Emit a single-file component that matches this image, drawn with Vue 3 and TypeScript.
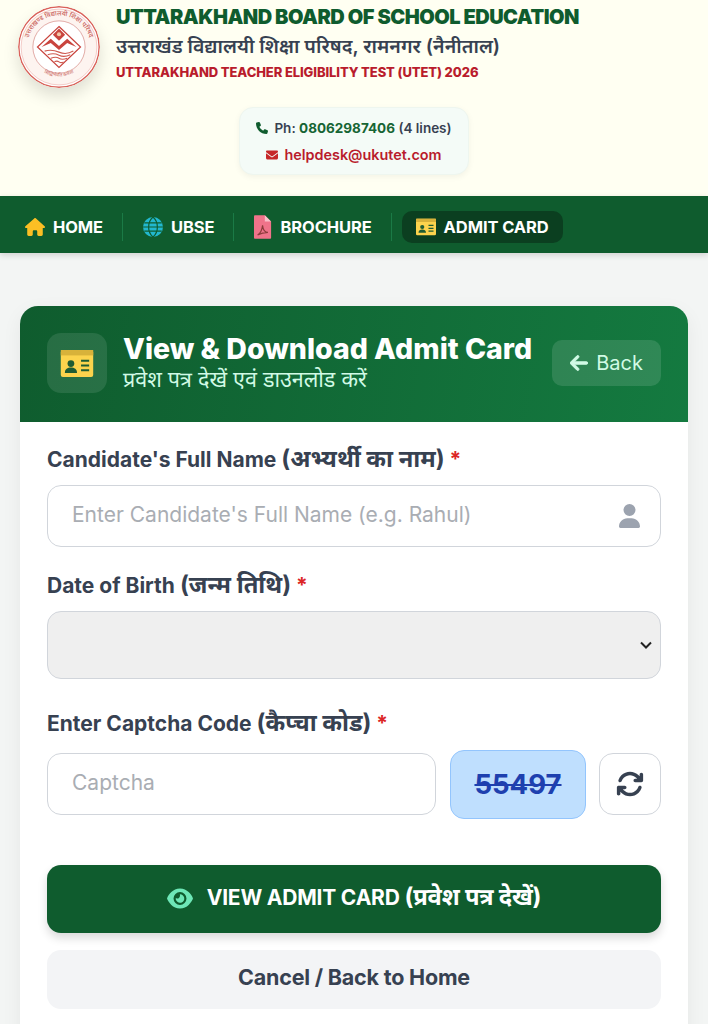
<template>
  <div class="page">
    <header class="top">
      <div class="brand">
        <svg class="seal" viewBox="0 0 80 80">
          <circle cx="40" cy="40" r="39.2" fill="#fff" stroke="#d9605a" stroke-width="1.4" />
          <circle cx="40" cy="40" r="37" fill="#fdf4f0" stroke="#e9a19b" stroke-width=".5" />
          <circle cx="40" cy="40" r="25.5" fill="#fff" stroke="#cf7a74" stroke-width=".6" />
          <defs>
            <path id="sealTop" d="M10 48 A31 31 0 1 1 70 48" />
            <path id="sealBottom" d="M17 58 A30 30 0 0 0 63 58" />
          </defs>
          <text class="seal-text"><textPath href="#sealTop" startOffset="50%" text-anchor="middle">उत्तराखण्ड विद्यालयी शिक्षा परिषद</textPath></text>
          <text class="seal-small"><textPath href="#sealBottom" startOffset="50%" text-anchor="middle">सिद्धिर्भवति कर्मजा</textPath></text>
          <path d="M40 20 L61 40 L40 60 L19 40 Z" fill="#fff" stroke="#c9443e" stroke-width="1.2" />
          <path d="M23 40 L32 32 L40 39 L48 32 L57 40 L48 36 L40 43 L32 36 Z" fill="#c9443e" />
          <path d="M40 22 L46 28 L40 34 L34 28 Z" fill="#c9443e" />
          <circle cx="40" cy="27.5" r="2" fill="#f3c9a8" />
          <path d="M26 44 Q33 42 40 45 T54 44 M29 47.500 Q35 45.500 40 48 T51 47.500 M32 51 Q37 49 40 51 T48 51 M35.500 54.500 Q38 53 40 54.500 T44.500 54.500" fill="none" stroke="#cf5a50" stroke-width="1.1" />
        </svg>
        <div class="brand-text">
          <h1>UTTARAKHAND BOARD OF SCHOOL EDUCATION</h1>
          <p class="hindi">उत्तराखंड विद्यालयी शिक्षा परिषद, रामनगर (नैनीताल)</p>
          <p class="exam">UTTARAKHAND TEACHER ELIGIBILITY TEST (UTET) 2026</p>
        </div>
      </div>
      <div class="contact">
        <div class="line phone">
          <svg viewBox="0 0 512 512" class="ci"><path fill="#0f5c2e" d="M164.900 24.600c-7.700-18.600-28-28.500-47.400-23.200l-88 24C12.100 30.200 0 46 0 64C0 311.400 200.600 512 448 512c18 0 33.800-12.100 38.600-29.500l24-88c5.300-19.400-4.600-39.700-23.200-47.400l-96-40c-16.300-6.800-35.200-2.100-46.300 11.600L304.700 368C234.300 334.700 177.300 277.700 144 207.300L193.300 167c13.700-11.200 18.400-30 11.600-46.300l-40-96z" /></svg>
          <span>Ph: <b>08062987406</b> (4 lines)</span>
        </div>
        <div class="line mail">
          <svg viewBox="0 0 512 512" class="ci"><path fill="#c62828" d="M48 64C21.500 64 0 85.500 0 112c0 15.100 7.100 29.300 19.200 38.400L236.800 313.600c11.400 8.500 27 8.500 38.400 0L492.800 150.400c12.100-9.100 19.200-23.300 19.200-38.400c0-26.500-21.500-48-48-48H48zM0 176V384c0 35.300 28.700 64 64 64H448c35.300 0 64-28.700 64-64V176L294.400 339.200c-22.800 17.100-54 17.100-76.800 0L0 176z" /></svg>
          <span>helpdesk@ukutet.com</span>
        </div>
      </div>
    </header>

    <nav class="nav">
      <a class="nav-item">
        <svg viewBox="0 0 576 512" class="ni"><path fill="#fbbf24" d="M575.800 255.500c0 18-15 32.100-32 32.100h-32l.7 160.200c0 2.700-.2 5.400-.5 8.100V472c0 22.100-17.900 40-40 40H456c-1.100 0-2.200 0-3.300-.1c-1.400 .1-2.800 .1-4.200 .1H416 392c-22.100 0-40-17.900-40-40V448 384c0-17.700-14.300-32-32-32H256c-17.700 0-32 14.300-32 32v64 24c0 22.100-17.900 40-40 40H160 128.100c-1.500 0-3-.1-4.500-.2c-1.200 .1-2.400 .2-3.600 .2H104c-22.100 0-40-17.900-40-40V360c0-.9 0-1.900 .1-2.800V287.600H32c-18 0-32-14-32-32.100c0-9 3-17 10-24L266.400 8c7-7 15-8 22-8s15 2 21 7L564.800 231.500c8 7 12 15 11 24z" /></svg>
        HOME
      </a>
      <a class="nav-item">
        <svg viewBox="0 0 24 24" class="ni globe"><circle cx="12" cy="12" r="12" fill="#22b8cf" /><path d="M0 12h24M1.500 7h21M1.500 17h21M12 0c-7 6-7 18 0 24M12 0c7 6 7 18 0 24" fill="none" stroke="#0f5c2e" stroke-width="1.400" /></svg>
        UBSE
      </a>
      <a class="nav-item">
        <svg viewBox="0 0 20 26" class="ni pdf"><path d="M1 0h11l7 7v18a1 1 0 0 1-1 1H1a1 1 0 0 1-1-1V1a1 1 0 0 1 1-1z" fill="#f0738a" /><path d="M12 0v7h7z" fill="#f9c0ca" /><path d="M4 22c3-2 5-6 5.500-11c.5 5 3 8 6 8c-4 0-8 1-11.500 3z" fill="none" stroke="#8c3b3b" stroke-width="1.300" /></svg>
        BROCHURE
      </a>
      <a class="nav-item active">
        <svg viewBox="0 0 24 20" class="ni"><rect width="24" height="20" rx="1.500" fill="#fcd34d" /><rect width="24" height="4" fill="#d8b23a" /><circle cx="7.500" cy="10" r="2.500" fill="#1f5c33" /><path d="M3 17c0-3 2-4 4.500-4s4.500 1 4.500 4z" fill="#1f5c33" /><path d="M15 8h6M15 11.500h6M15 15h6" stroke="#1f5c33" stroke-width="1.500" /></svg>
        ADMIT CARD
      </a>
    </nav>

    <main class="main">
      <section class="card">
        <div class="card-head">
          <div class="head-icon">
            <svg viewBox="0 0 24 20" width="34" height="27"><rect width="24" height="20" rx="1.500" fill="#fcd34d" /><rect width="24" height="4" fill="#d8b23a" /><circle cx="7.500" cy="10" r="2.500" fill="#1f5c33" /><path d="M3 17c0-3 2-4 4.500-4s4.500 1 4.500 4z" fill="#1f5c33" /><path d="M15 8h6M15 11.500h6M15 15h6" stroke="#1f5c33" stroke-width="1.500" /></svg>
          </div>
          <div class="head-text">
            <h2>View &amp; Download Admit Card</h2>
            <p>प्रवेश पत्र देखें एवं डाउनलोड करें</p>
          </div>
          <a class="back">
            <svg viewBox="0 0 448 512" width="18" height="20"><path fill="#d1fae5" stroke="#d1fae5" stroke-width="24" d="M9.400 233.400c-12.500 12.500-12.500 32.800 0 45.300l160 160c12.500 12.500 32.800 12.500 45.300 0s12.500-32.800 0-45.300L109.200 288 416 288c17.700 0 32-14.300 32-32s-14.300-32-32-32l-306.700 0L214.600 118.600c12.500-12.500 12.500-32.800 0-45.300s-32.800-12.500-45.300 0l-160 160z" /></svg>
            Back
          </a>
        </div>

        <form class="form" @submit.prevent>
          <div class="field name-field">
            <label>Candidate's Full Name <span class="hi">(अभ्यर्थी का नाम)</span> <i>*</i></label>
            <div class="input-wrap">
              <input type="text" placeholder="Enter Candidate's Full Name (e.g. Rahul)" />
              <svg viewBox="0 0 448 512" class="user"><path fill="#9ca3af" d="M224 256A128 128 0 1 0 224 0a128 128 0 1 0 0 256zm-45.700 48C79.800 304 0 383.800 0 482.300C0 498.700 13.300 512 29.700 512H418.300c16.400 0 29.700-13.300 29.700-29.700C448 383.800 368.200 304 269.700 304H178.300z" /></svg>
            </div>
          </div>

          <div class="field dob-field">
            <label>Date of Birth <span class="hi">(जन्म तिथि)</span> <i>*</i></label>
            <div class="select">
              <svg viewBox="0 0 12 8" width="12" height="8"><path d="M1 1.500l5 5 5-5" fill="none" stroke="#222" stroke-width="2" /></svg>
            </div>
          </div>

          <div class="field captcha-field">
            <label>Enter Captcha Code <span class="hi">(कैप्चा कोड)</span> <i>*</i></label>
            <div class="captcha-row">
              <input type="text" placeholder="Captcha" />
              <div class="code">{{ captcha }}</div>
              <button type="button" class="refresh">
                <svg viewBox="0 0 512 512" width="28" height="28"><path fill="#374151" d="M105.100 202.600c7.700-21.800 20.200-42.300 37.800-59.800c62.500-62.500 163.800-62.500 226.300 0L386.300 160H352c-17.700 0-32 14.300-32 32s14.300 32 32 32H463.500c0 0 0 0 0 0h.4c17.700 0 32-14.300 32-32V80c0-17.700-14.300-32-32-32s-32 14.300-32 32v35.200L414.400 97.600c-87.500-87.500-229.300-87.500-316.800 0C73.200 122 55.600 150.700 44.800 181.400c-5.900 16.700 2.900 34.900 19.500 40.800s34.900-2.900 40.800-19.500zM39 289.300c-5 1.500-9.800 4.200-13.700 8.200c-4 4-6.700 8.800-8.100 14c-.3 1.200-.6 2.500-.8 3.800c-.3 1.700-.4 3.400-.4 5.100V432c0 17.700 14.300 32 32 32s32-14.300 32-32V396.900l17.600 17.500 0 0c87.500 87.400 229.300 87.400 316.700 0c24.400-24.400 42.100-53.100 52.900-83.700c5.900-16.700-2.900-34.900-19.500-40.800s-34.900 2.900-40.800 19.500c-7.700 21.800-20.200 42.300-37.800 59.800c-62.500 62.500-163.800 62.500-226.300 0l-.1-.1L125.600 352H160c17.700 0 32-14.300 32-32s-14.300-32-32-32H48.400c-1.600 0-3.200 .1-4.800 .3s-3.100 .5-4.600 1z" /></svg>
              </button>
            </div>
          </div>

          <button type="submit" class="primary">
            <svg viewBox="0 0 576 512" width="26" height="23"><path fill="#6ee7b7" d="M288 32c-80.800 0-145.500 36.800-192.600 80.600C48.600 156 17.300 208 2.500 243.700c-3.300 7.900-3.300 16.700 0 24.600C17.300 304 48.600 356 95.400 399.400C142.500 443.200 207.200 480 288 480s145.500-36.800 192.600-80.600c46.800-43.500 78.100-95.400 93-131.100c3.300-7.900 3.300-16.700 0-24.600c-14.900-35.700-46.200-87.700-93-131.100C433.500 68.800 368.800 32 288 32zM144 256a144 144 0 1 1 288 0 144 144 0 1 1 -288 0zm144-64c0 35.300-28.700 64-64 64c-7.100 0-13.900-1.200-20.300-3.300c-5.500-1.800-11.900 1.600-11.700 7.400c.3 6.900 1.300 13.800 3.200 20.700c13.700 51.200 66.400 81.600 117.600 67.900s81.600-66.400 67.900-117.600c-11.100-41.500-47.800-69.400-88.600-71.100c-5.800-.2-9.200 6.100-7.400 11.700c2.100 6.400 3.300 13.200 3.300 20.300z" /></svg>
            <span>VIEW ADMIT CARD <span class="hi">(प्रवेश पत्र देखें)</span></span>
          </button>
          <button type="button" class="secondary">Cancel / Back to Home</button>
        </form>
      </section>
    </main>
  </div>
</template>

<script setup lang="ts">
const captcha = '55497'
</script>

<style>
html, body { margin: 0; background: #f3f5f4; overflow: hidden; }
</style>

<style scoped>
.page {
  width: 708px; height: 1024px; overflow: hidden;
  font-family: Inter, "Noto Sans Devanagari", "Noto Sans", sans-serif;
  background: #f3f5f4; color: #374151;
}
.top { height: 196px; box-sizing: border-box; background: #fffff2; padding-top: 6px; }
.brand { display: flex; gap: 16px; padding-left: 18px; }
.seal { width: 82px; height: 82px; border-radius: 50%; box-shadow: 0 8px 16px rgba(0,0,0,.13); flex: none; }
.seal-text { font-size: 6.4px; fill: #c9625b; font-weight: 500; }
.seal-small { font-size: 4.5px; fill: #c9625b; }
h1 { margin: 0; font-size: 20px; line-height: 22px; font-weight: 900; color: #0f5c2e; letter-spacing: -.5px; white-space: nowrap; }
.hindi { margin: 5px 0 0; font-size: 19.5px; line-height: 26px; font-weight: 600; color: #374151; white-space: nowrap; }
.exam { margin: 4px 0 0; font-size: 13px; line-height: 18px; font-weight: 800; color: #b91c2c; letter-spacing: -.1px; white-space: nowrap; }
.contact {
  width: 230px; height: 68px; box-sizing: border-box; margin: 19px auto 0 239px;
  background: #f4fbf7; border: 1px solid #eef6ef; border-radius: 14px;
  box-shadow: 0 2px 6px rgba(0,0,0,.05);
  display: flex; flex-direction: column; align-items: center; justify-content: center; gap: 9px;
  font-size: 13.5px; font-weight: 600; line-height: 18px;
}
.line { display: flex; align-items: center; gap: 6px; white-space: nowrap; }
.ci { width: 12px; height: 12px; }
.phone b { color: #166534; font-weight: 700; }
.mail { color: #b91c2c; font-size: 14.4px; }
.nav {
  height: 57px; box-sizing: border-box; padding: 5px 0 0 15px;
  background: #0f5c2e; display: flex; align-items: center;
  box-shadow: 0 2px 6px rgba(0,0,0,.15); position: relative;
}
.nav-item {
  display: flex; align-items: center; gap: 8px; height: 32px; padding: 0 20px;
  color: #fff; font-weight: 700; font-size: 16.5px; letter-spacing: -.1px;
  position: relative; white-space: nowrap;
}
.nav-item:first-child { padding-left: 10px; }
.nav-item:not(.active)::after {
  content: ""; position: absolute; right: 0; top: 2px; bottom: 2px; width: 1px; background: #1b7a46;
}
.ni { width: 20px; height: 18px; }
.globe { height: 20px; }
.pdf { height: 24px; width: 18px; }
.active { background: #0b3f20; border-radius: 10px; margin-left: 10px; padding: 0 14px; }
.main { padding: 53px 20px 0; }
.card { background: #fff; border-radius: 18px 18px 0 0; box-shadow: 0 6px 20px rgba(0,0,0,.06); overflow: hidden; }
.card-head {
  height: 116px; box-sizing: border-box; padding: 27px 27px 0;
  background: linear-gradient(100deg, #0f5c2e, #147a40);
  display: flex; align-items: flex-start; gap: 16px;
}
.head-icon {
  width: 60px; height: 60px; border-radius: 14px; background: rgba(255,255,255,.1);
  display: flex; align-items: center; justify-content: center; flex: none;
}
.head-text { flex: 1; margin-top: -1px; white-space: nowrap; }
h2 { margin: 0; font-size: 28.5px; line-height: 34px; font-weight: 800; color: #fff; letter-spacing: 0; }
.head-text p { margin: 1px 0 0; font-size: 21.5px; line-height: 24px; color: #d1fae5; }
.back {
  width: 109px; height: 46px; margin-top: 7px; border-radius: 10px; background: rgba(255,255,255,.12);
  display: flex; align-items: center; justify-content: center; gap: 8px; color: #d1fae5; font-size: 20px; flex: none;
}
.form { padding: 21px 27px 40px; display: flex; flex-direction: column; }
.name-field { margin-bottom: 22px; }
.dob-field { margin-bottom: 28px; }
label { display: block; font-size: 21px; line-height: 32px; font-weight: 700; color: #374151; margin-bottom: 9px; white-space: nowrap; }
.hi { font-size: 1.13em; }
label i { color: #dc2626; font-style: normal; }
.input-wrap { position: relative; }
input {
  width: 100%; height: 62px; box-sizing: border-box; border: 1px solid #d1d5db; border-radius: 14px;
  padding: 0 24px 3px; font: 400 21px Inter, sans-serif; background: #fff; outline: none;
}
input::placeholder { color: #a9adb3; }
.user { position: absolute; right: 21px; top: 19px; width: 21px; height: 24px; }
.select {
  height: 68px; box-sizing: border-box; border: 1px solid #d1d5db; border-radius: 14px; background: #efefef;
  display: flex; align-items: center; justify-content: flex-end; padding-right: 8px;
}
.captcha-field { margin-bottom: 50px; }
.captcha-field label { margin-bottom: 13px; }
.captcha-row { display: flex; align-items: center; gap: 14px; height: 62px; }
.captcha-row input { flex: 1; min-width: 0; }
.code {
  width: 136px; height: 69px; flex: none; box-sizing: border-box; border: 1px solid #93c5fd; border-radius: 14px; background: #bfdffe;
  display: flex; align-items: center; justify-content: center;
  font-size: 27.5px; font-weight: 700; color: #1e40af; text-decoration: line-through;
}
.refresh {
  width: 62px; height: 62px; flex: none; border: 1px solid #d1d5db; border-radius: 14px; background: #fff;
  display: flex; align-items: center; justify-content: center; padding: 0; margin-left: -1px;
}
.primary, .secondary {
  width: 100%; border: 0; border-radius: 14px; display: flex; align-items: center; justify-content: center;
  font-family: Inter, "Noto Sans Devanagari", sans-serif; font-weight: 700;
}
.primary {
  height: 68px; padding: 0 0 2px; background: #0f5c2e; color: #fff; font-size: 21px; gap: 14px;
  box-shadow: 0 5px 10px rgba(0,0,0,.15); letter-spacing: -.2px;
}
.secondary { height: 59px; padding: 0 0 5px; margin-top: 17px; background: #f3f4f6; color: #374151; font-size: 21.5px; letter-spacing: -.2px; }
</style>
